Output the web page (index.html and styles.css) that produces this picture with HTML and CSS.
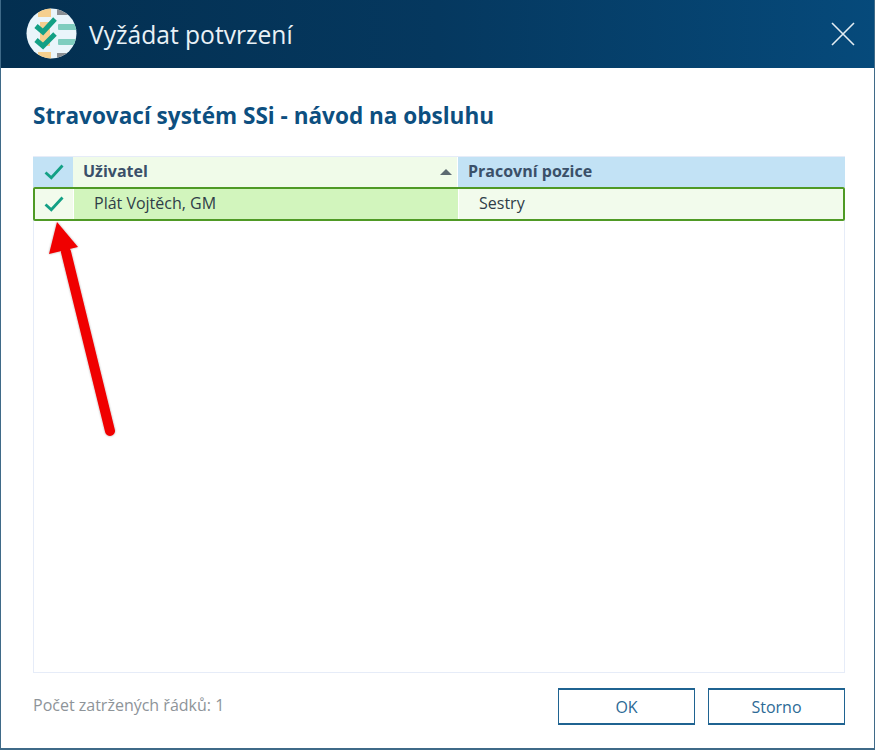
FILE: index.html
```html
<!DOCTYPE html>
<html lang="cs">
<head>
<meta charset="utf-8">
<title>Vyžádat potvrzení</title>
<link rel="stylesheet" href="styles.css">
</head>
<body>
<div class="window">
  <header class="titlebar">
    <svg class="logo" width="52" height="52" viewBox="0 0 52 52">
      <defs><clipPath id="c"><circle cx="25.5" cy="25.5" r="25"/></clipPath></defs>
      <g clip-path="url(#c)">
        <rect width="52" height="52" fill="#eaf5fb"/>
        <rect x="12" y="0" width="13" height="9" fill="#f5cf8e"/>
        <rect x="12" y="44" width="13" height="8" fill="#f5cf8e"/>
        <rect x="14" y="14" width="10" height="24" fill="#f5cf8e"/>
        <rect x="31" y="0" width="21" height="7" fill="#8a8f94"/>
        <rect x="31" y="45" width="21" height="7" fill="#8a8f94"/>
        <rect x="32" y="16" width="20" height="6" rx="1" fill="#7fcdbf"/>
        <rect x="32" y="31" width="20" height="6" rx="1" fill="#7fcdbf"/>
        <path d="M10 18l7 6 12-13M10 32l7 6 12-12" fill="none" stroke="#13a085" stroke-width="5"/>
      </g>
    </svg>
    <h1 class="title">Vyžádat potvrzení</h1>
    <svg class="close" width="24" height="24" viewBox="0 0 24 24"><path d="M1 1l22 22M23 1L1 23" stroke="#e4edf3" stroke-width="1.6" fill="none"/></svg>
  </header>
  <main class="body">
    <h2 class="heading">Stravovací systém SSi - návod na obsluhu</h2>
    <section class="grid">
      <div class="row head">
        <div class="c-check head-check"><svg class="tick" width="20" height="16" viewBox="0 0 20 16"><path d="M1.5 8.5l5.8 5.3L18.5 1.5" fill="none" stroke="#13a085" stroke-width="2.8"/></svg></div>
        <div class="c-user head-user"><span class="head-label">Uživatel</span><span class="sort"></span></div>
        <div class="c-pos head-pos">Pracovní pozice</div>
      </div>
      <div class="row item">
        <div class="c-check item-check"><svg class="tick" width="20" height="16" viewBox="0 0 20 16"><path d="M1.5 8.5l5.8 5.3L18.5 1.5" fill="none" stroke="#13a085" stroke-width="2.8"/></svg></div>
        <div class="c-user item-user">Plát Vojtěch, GM</div>
        <div class="c-pos item-pos">Sestry</div>
      </div>
    </section>
    <footer class="foot">
      <span class="count">Počet zatržených řádků: 1</span>
      <div class="buttons">
        <button class="btn">OK</button>
        <button class="btn">Storno</button>
      </div>
    </footer>
  </main>
  <svg class="arrow" width="90" height="225" viewBox="0 0 90 225">
    <defs><filter id="s" x="-20%" y="-10%" width="140%" height="120%"><feDropShadow dx="0" dy="0" stdDeviation="1" flood-color="#000" flood-opacity=".35"/></filter></defs>
    <g filter="url(#s)">
      <path d="M26 32L70 211" stroke="#f00006" stroke-width="10" stroke-linecap="round" fill="none"/>
      <path d="M17 2L9 34 38 27Z" fill="#f00006"/>
    </g>
  </svg>
</div>
</body>
</html>
```
FILE: styles.css
```css
* { box-sizing: border-box; }
html, body { margin: 0; padding: 0; }
body { width: 875px; height: 750px; background: #fff; font-family: "Open Sans", sans-serif; overflow: hidden; }
.window { position: relative; width: 875px; height: 750px; display: flex; flex-direction: column; border: solid #3f6a88; border-width: 0 1px 2px 1px; background: #fff; }
.titlebar { height: 68px; flex: none; display: flex; align-items: center; padding: 0 19px 0 25px; background: linear-gradient(90deg, #032f50 0%, #05385f 50%, #064a7b 100%); }
.logo { flex: none; }
.title { margin: 0 0 0 11px; font-size: 24.6px; font-weight: 400; color: #e9f1f6; flex: 1; }
.close { flex: none; }
.body { flex: 1; display: flex; flex-direction: column; padding: 32px 29px 22px 32px; }
.heading { margin: 0; height: 32px; font-size: 22.55px; line-height: 32px; font-weight: 700; color: #0d4f80; }
.grid { margin-top: 24px; height: 517px; border: 1px solid #e6ecf8; display: flex; flex-direction: column; }
.row { display: flex; }
.c-check { width: 40px; flex: none; display: flex; align-items: center; justify-content: center; }
.c-user { width: 385px; flex: none; }
.c-pos { flex: 1; }
.head { height: 30px; font-size: 16px; font-weight: 700; color: #3a5069; line-height: 28px; margin: 0 -1px; }
.head-check { background: #c2e2f5; padding-left: 2px; }
.head-user { width: 384px; background: #f0fbe9; padding: 0 5px 0 10px; display: flex; justify-content: space-between; align-items: flex-start; }
.sort { width: 0; height: 0; margin-top: 12px; border: 6px solid transparent; border-top: 0; border-bottom: 6px solid #5d6b72; }
.head-pos { background: #c2e2f5; padding-left: 10px; border-left: 1px solid #fff; }
.item { height: 34px; margin: 0 -1px; border: 2px solid #4f9a25; border-radius: 2px; font-size: 16px; color: #2f3d48; line-height: 29px; }
.item-check { background: #f2fbec; border-right: 1px solid #fff; width: 39px; }
.item-user { background: #d2f5bd; padding-left: 20px; width: 384px; }
.item-pos { background: #f2fbec; padding-left: 20px; border-left: 1px solid #fff; }
.foot { display: flex; justify-content: space-between; align-items: flex-start; margin-top: 15px; }
.count { font-size: 16px; color: #8e9499; line-height: 34px; }
.buttons { display: flex; gap: 13px; }
.btn { width: 137px; height: 37px; background: #fff; border: 1px solid #1f6391; border-width: 2px 1px 2px 1px; font: 400 16px "Open Sans", sans-serif; color: #2c6a96; padding: 0; }
.arrow { position: absolute; left: 39px; top: 220px; overflow: visible; }
```
